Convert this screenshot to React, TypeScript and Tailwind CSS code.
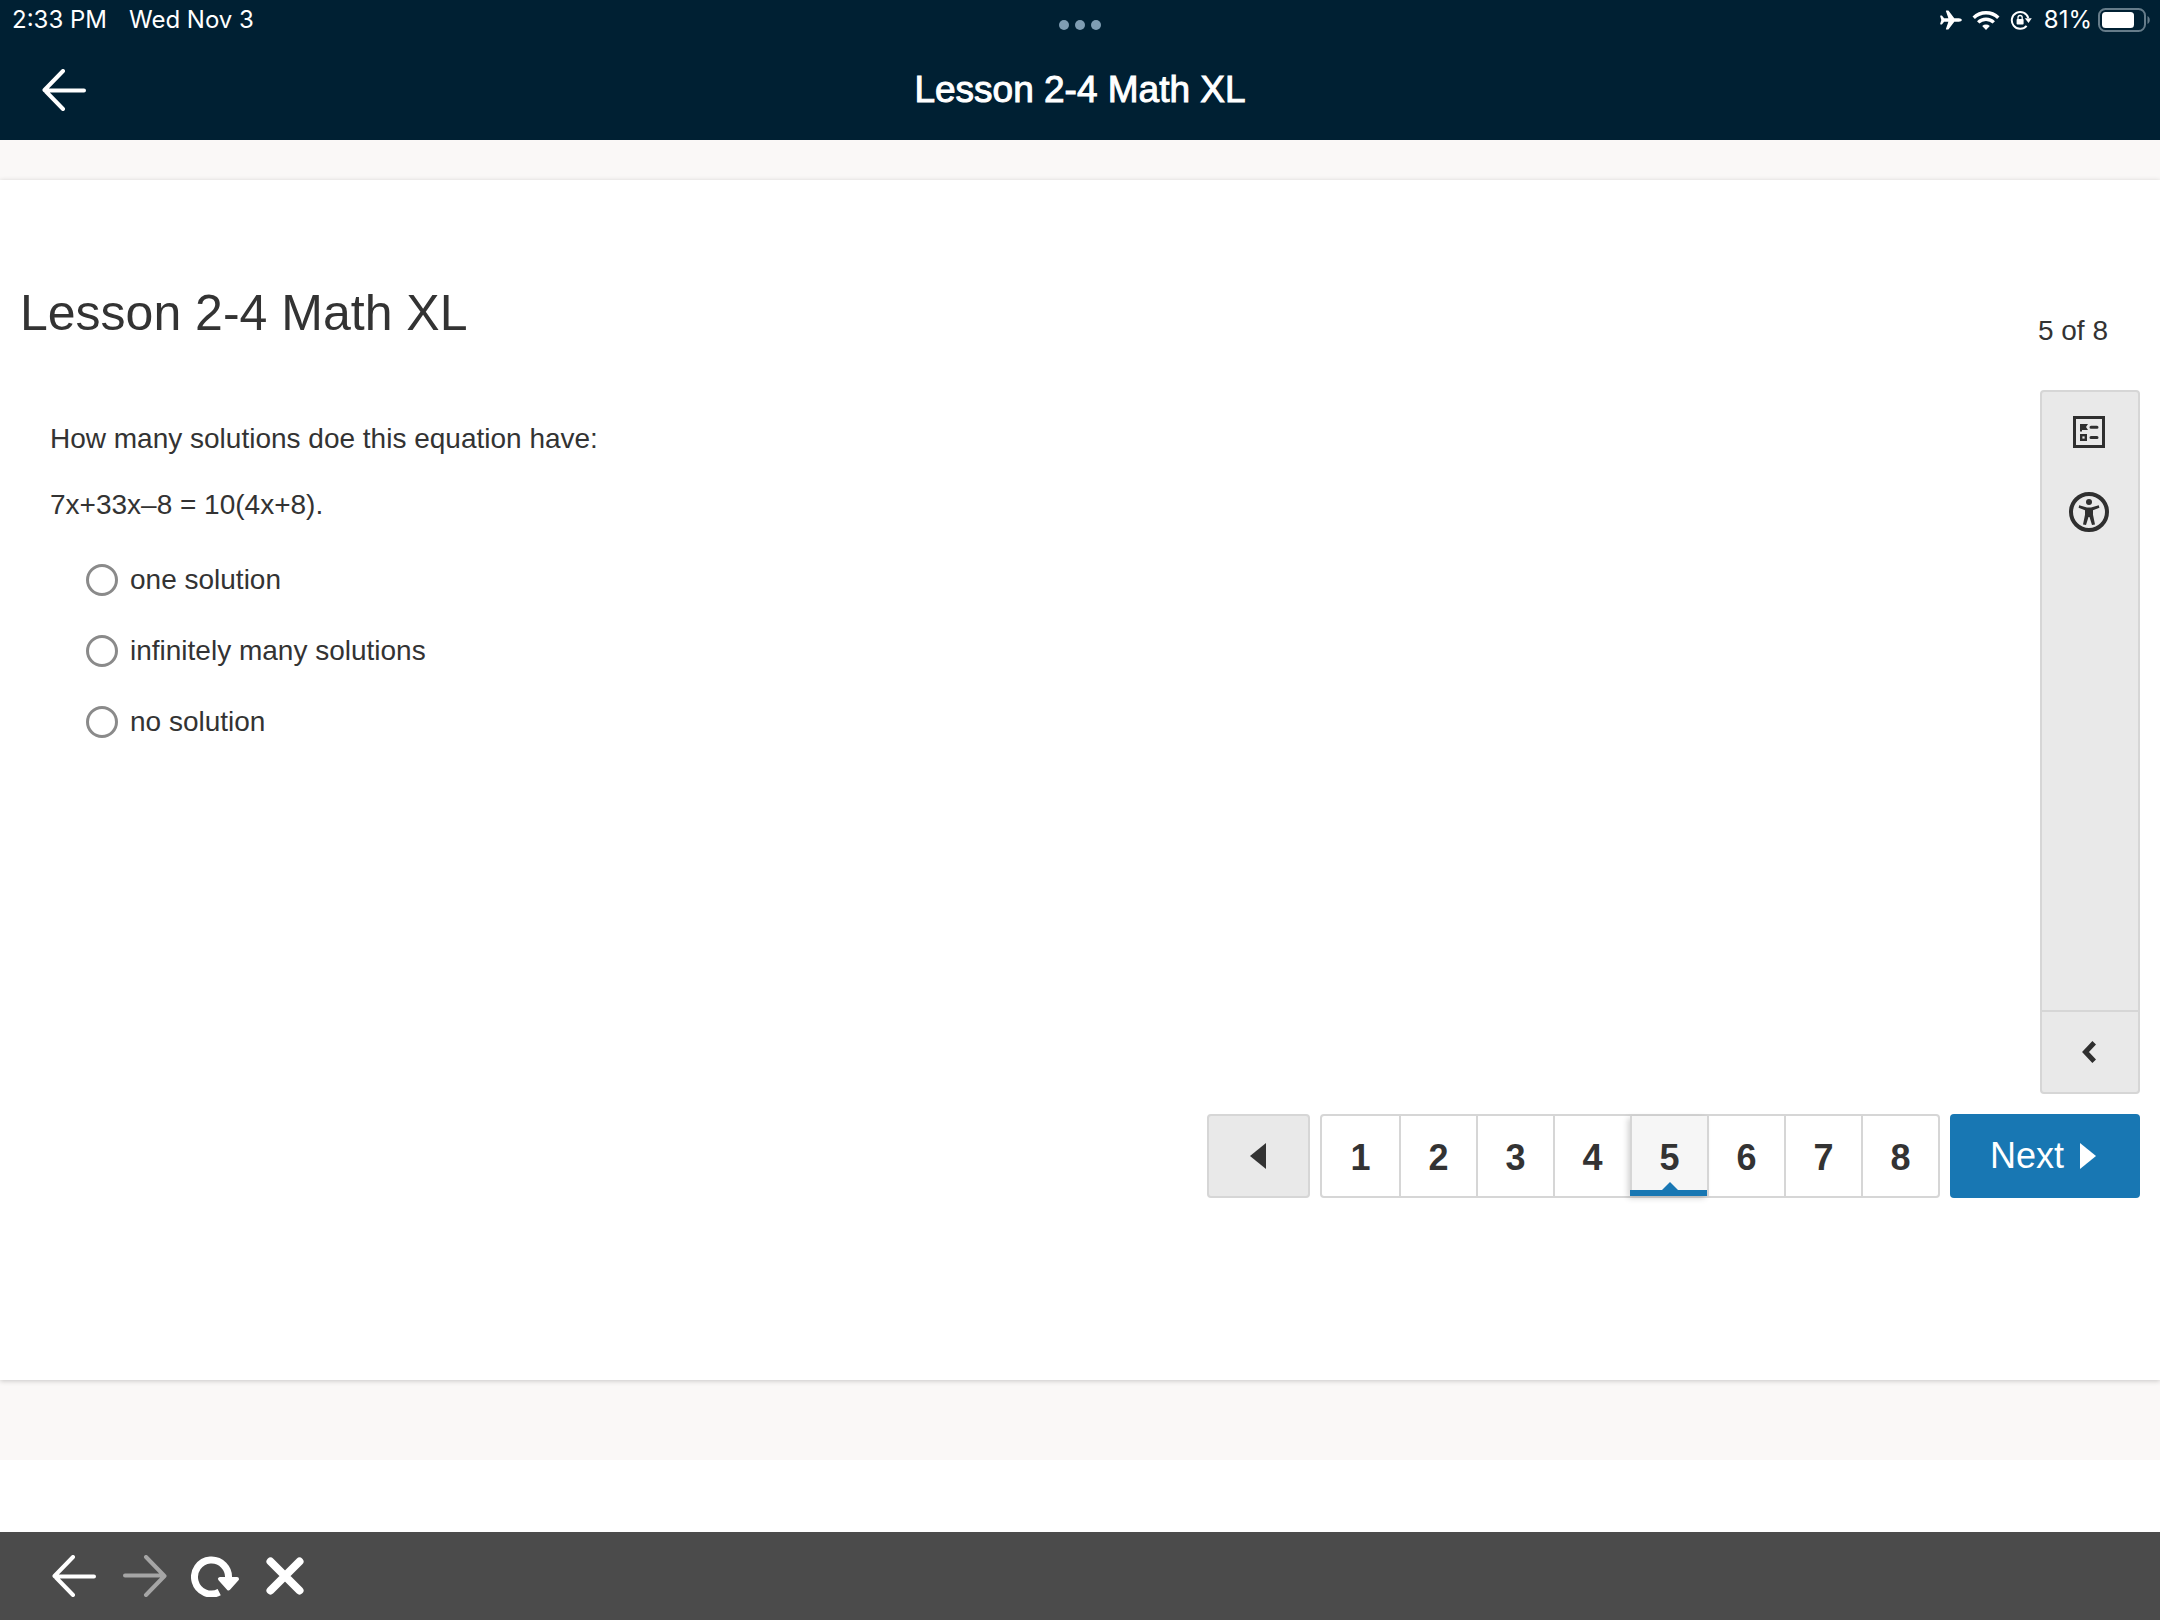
import React, { useState } from "react";
import clsx from "clsx";

const options = ["one solution", "infinitely many solutions", "no solution"];
const pages = [1, 2, 3, 4, 5, 6, 7, 8];

const ArrowLeft = ({ className }: { className?: string }) => (
  <svg
    viewBox="0 0 44 42"
    className={clsx("h-[42px] w-11", className)}
    fill="none"
    stroke="currentColor"
    strokeWidth="4"
    strokeLinecap="round"
    strokeLinejoin="round"
  >
    <path d="M21 2 2.500 21 21 40M3 21.500H42" />
  </svg>
);

const StatusBar = () => (
  <div className="grid h-10 grid-cols-3 px-2 font-['Inter',sans-serif] text-2xl leading-10">
    <div className="flex gap-[22px] pl-1">
      <span>2:33 PM</span>
      <span>Wed Nov 3</span>
    </div>
    <div className="flex items-end justify-center gap-1.5 pb-2.5">
      <span className="size-2.5 rounded-full bg-[#7f9db3]" />
      <span className="size-2.5 rounded-full bg-[#7f9db3]" />
      <span className="size-2.5 rounded-full bg-[#7f9db3]" />
    </div>
    <div className="flex items-center justify-end">
      {/* airplane */}
      <svg viewBox="0 0 22 20" className="mr-2.5 h-5 w-[22px]" fill="currentColor">
        <path d="M21.800 10c0 1-1.300 1.700-3 1.700h-4.500L8.600 19.200c-.2.300-.5.400-.8.400H6.400c-.4 0-.6-.3-.5-.7l2.500-7.200H4.100l-2 2.500c-.2.200-.4.300-.6.300H.7c-.4 0-.6-.3-.5-.7L1.300 10 .2 6.200c-.1-.4.100-.7.500-.7h.8c.2 0 .4.100.6.300l2 2.500h4.300L5.900 1.100c-.1-.4.100-.7.500-.7h1.400c.3 0 .6.100.8.400l5.700 7.500h4.500c1.700 0 3 .7 3 1.700Z" />
      </svg>
      {/* wifi */}
      <svg viewBox="0 0 28 20" className="mr-2.5 h-5 w-7" fill="none" stroke="currentColor" strokeWidth="3.400">
        <path d="M1.700 7.800a17.600 17.600 0 0 1 24.600 0M6.200 12.400a11.200 11.200 0 0 1 15.600 0" />
        <path d="M14 20l-3.800-3.900a5.600 5.600 0 0 1 7.600 0Z" fill="currentColor" stroke="none" />
      </svg>
      {/* rotation lock */}
      <svg viewBox="0 0 22 20" className="mr-3 h-5 w-[22px]">
        <path d="M16.600 15.800A8.400 8.400 0 1 1 18.300 8" fill="none" stroke="currentColor" strokeWidth="2" />
        <path d="M14.800 8.200h7l-3.300 4.800Z" fill="currentColor" />
        <rect x="6.600" y="9" width="7" height="5.600" rx="0.800" fill="currentColor" />
        <path d="M8 9.500V7.600a2.100 2.100 0 0 1 4.200 0v1.900" fill="none" stroke="currentColor" strokeWidth="1.300" />
      </svg>
      <span>81%</span>
      {/* battery */}
      <svg viewBox="0 0 54 24" className="ml-1.5 h-6 w-[54px]">
        <rect x="1" y="1" width="46" height="22" rx="6.500" fill="none" stroke="#667c8a" strokeWidth="2" />
        <rect x="4" y="4" width="32" height="16" rx="3.500" fill="currentColor" />
        <path d="M49.500 8v8c3-1.500 3-6.500 0-8Z" fill="#667c8a" />
      </svg>
    </div>
  </div>
);

const ToolPanel = () => (
  <aside className="flex w-[100px] flex-col rounded border-2 border-[#d6d6d6] bg-[#e9e9e9] text-[#2f2f2f]">
    <div className="flex flex-1 flex-col items-center gap-11 pt-6 pr-0.5">
      <button type="button" aria-label="Question list">
        <svg viewBox="0 0 32 32" className="size-8">
          <rect x="1.500" y="1.500" width="29" height="29" fill="none" stroke="currentColor" strokeWidth="3" />
          <path d="M7 8h8l-2 3 2 3H9v1.500H7Z" fill="currentColor" />
          <rect x="8.200" y="19.200" width="4.600" height="4.600" fill="none" stroke="currentColor" strokeWidth="2.400" />
          <path d="M18 11.300h6M18 21.500h6" stroke="currentColor" strokeWidth="3" strokeLinecap="round" />
        </svg>
      </button>
      <button type="button" aria-label="Accessibility">
        <svg viewBox="0 0 40 40" className="size-10">
          <circle cx="20" cy="20" r="18" fill="none" stroke="currentColor" strokeWidth="4" />
          <circle cx="20" cy="10" r="3" fill="currentColor" />
          <path
            d="M10.200 13.200 18 15.500h4l7.800-2.300.6 2.500-6.400 2.600v4.500l2 9.700-3 .6-2.500-8h-1l-2.500 8-3-.6 2-9.700v-4.500l-6.400-2.600Z"
            fill="currentColor"
          />
        </svg>
      </button>
    </div>
    <button
      type="button"
      aria-label="Expand tools"
      className="flex h-[82px] items-center justify-center border-t-2 border-[#d6d6d6] pr-0.5"
    >
      <svg viewBox="0 0 14 22" className="h-[22px] w-3.5" fill="none" stroke="currentColor" strokeWidth="5">
        <path d="M12.200 1.800 3.500 11l8.700 9.200" />
      </svg>
    </button>
  </aside>
);

const Pagination = ({ page, setPage }: { page: number; setPage: (n: number) => void }) => (
  <nav className="mt-5 flex h-[84px] justify-end gap-2.5 text-4xl text-[#333]">
    <button
      type="button"
      aria-label="Previous"
      className="flex w-[103px] items-center justify-center rounded border-2 border-[#d6d6d6] bg-[#e9e9e9] pr-0.5"
      onClick={() => setPage(Math.max(1, page - 1))}
    >
      <svg viewBox="0 0 16 26" className="h-[26px] w-4" fill="currentColor">
        <path d="M16 0v26L0 13Z" />
      </svg>
    </button>
    <div className="flex rounded border-2 border-[#d6d6d6]">
      {pages.map((n) => (
        <button
          key={n}
          type="button"
          onClick={() => setPage(n)}
          className={clsx(
            "relative w-[77px] border-l-2 border-[#d6d6d6] pt-1 font-bold first:border-l-0",
            n === page && "bg-[#f6f6f6] shadow-[-2px_2px_6px_rgba(0,0,0,0.18)]"
          )}
        >
          {n}
          {n === page && (
            <span className="absolute -right-0.5 bottom-0 -left-0.5 h-1.5 bg-[#1877b3]">
              <svg viewBox="0 0 16 8" className="absolute bottom-1.5 left-8 h-2 w-4" fill="#1877b3">
                <path d="M8 0l8 8H0Z" />
              </svg>
            </span>
          )}
        </button>
      ))}
    </div>
    <button
      type="button"
      className="flex w-[190px] items-center justify-center gap-4 rounded bg-[#1877b3] pr-1 text-white"
      onClick={() => setPage(Math.min(pages.length, page + 1))}
    >
      Next
      <svg viewBox="0 0 16 26" className="h-[26px] w-4" fill="currentColor">
        <path d="M0 0v26l16-13Z" />
      </svg>
    </button>
  </nav>
);

const App = () => {
  const [page, setPage] = useState(5);

  return (
    <div className="flex min-h-screen flex-col bg-white font-['Liberation_Sans',Arial,sans-serif] text-[28px] leading-10 text-[#333]">
      <header className="bg-[#002033] text-white">
        <StatusBar />
        <div className="grid h-[100px] grid-cols-[1fr_auto_1fr] items-center px-[42px]">
          <button type="button" aria-label="Back" className="justify-self-start">
            <ArrowLeft />
          </button>
          <span className="text-[37px] [-webkit-text-stroke:1px_white]">Lesson 2-4 Math XL</span>
        </div>
      </header>

      <main className="flex flex-1 flex-col bg-[#faf8f7] pt-10 pb-20">
        <div className="flex flex-1 flex-col bg-white px-5 pt-[103px] pb-[182px] shadow-[0_1px_5px_rgba(0,0,0,0.2)]">
          <div className="mb-[39px] flex items-end justify-between">
            <h1 className="mb-2 text-[50px] leading-[60px]">Lesson 2-4 Math XL</h1>
            <span className="pr-8">{page} of 8</span>
          </div>

          <div className="flex flex-1 justify-between">
            <section className="pt-[29px] pl-[30px]">
              <p className="mb-[26px]">How many solutions doe this equation have:</p>
              <p>7x+33x–8 = 10(4x+8).</p>
              <div className="mt-[35px] flex flex-col items-start gap-[31px] pl-9">
                {options.map((option) => (
                  <label key={option} className="flex items-center gap-3">
                    <input
                      type="radio"
                      name="answer"
                      className="size-8 appearance-none rounded-full border-3 border-[#8a8a8a] bg-white checked:border-[10px]"
                    />
                    {option}
                  </label>
                ))}
              </div>
            </section>
            <ToolPanel />
          </div>

          <Pagination page={page} setPage={setPage} />
        </div>
      </main>

      <footer className="mt-[72px] flex h-[88px] items-center bg-[#4b4b4b] px-[52px] text-white">
        <button type="button" aria-label="Go back" className="mr-[27px]">
          <ArrowLeft />
        </button>
        <button type="button" aria-label="Go forward" className="mr-6 text-[#a5a5a5]">
          <ArrowLeft className="rotate-180" />
        </button>
        <button type="button" aria-label="Reload" className="mr-[27px]">
          <svg viewBox="0 0 48 42" className="h-[42px] w-12">
            <path d="M28.200 37.200A17 17 0 1 1 37.400 24" fill="none" stroke="currentColor" strokeWidth="7" />
            <path
              d="M29 24h17l-8.500 9.500Z"
              fill="currentColor"
              stroke="currentColor"
              strokeWidth="4"
              strokeLinejoin="round"
            />
          </svg>
        </button>
        <button type="button" aria-label="Stop">
          <svg viewBox="0 0 38 38" className="size-[38px]" stroke="currentColor" strokeWidth="8" strokeLinecap="round">
            <path d="M4.500 4.500l29 29M33.500 4.500l-29 29" />
          </svg>
        </button>
      </footer>
    </div>
  );
};

export default App;
